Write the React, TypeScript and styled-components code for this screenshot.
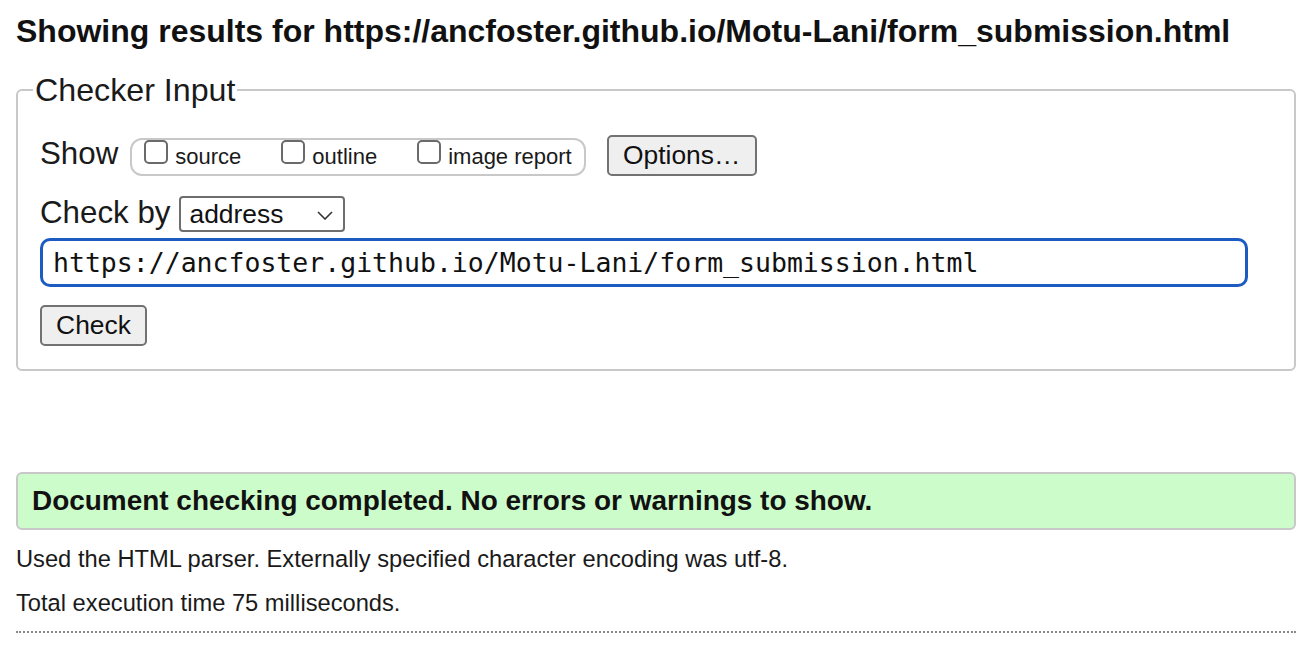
import styled, { createGlobalStyle } from "styled-components";

const GlobalStyle = createGlobalStyle`
  body {
    margin: 0;
    background: #fff;
    color: #1a1a1a;
    font-family: "Liberation Sans", Arial, Helvetica, sans-serif;
  }
`;

const SHOW_OPTIONS = ["source", "outline", "image report"];
const CHECKED_URL = "https://ancfoster.github.io/Motu-Lani/form_submission.html";

export default function App() {
  return (
    <>
      <GlobalStyle />
      <Page>
        <Heading>Showing results for {CHECKED_URL}</Heading>

        <CheckerForm>
          <Legend>Checker Input</Legend>

          <Row $top={27}>
            <Label $gap={12}>Show</Label>
            <ShowGroup>
              {SHOW_OPTIONS.map((opt) => (
                <ShowItem key={opt}>
                  <Box />
                  <ItemText>{opt}</ItemText>
                </ShowItem>
              ))}
            </ShowGroup>
            <Button $width={150} $left={21}>
              Options…
            </Button>
          </Row>

          <Row $top={19}>
            <Label $gap={9}>Check by</Label>
            <Select>
              <span>address</span>
              <svg width="16" height="9" viewBox="0 0 16 9">
                <polyline
                  points="1,1 8,8 15,1"
                  fill="none"
                  stroke="#333"
                  strokeWidth="1.6"
                />
              </svg>
            </Select>
          </Row>

          <UrlInput readOnly defaultValue={CHECKED_URL} />

          <Button $width={107} $top={18}>
            Check
          </Button>
        </CheckerForm>

        <Success>Document checking completed. No errors or warnings to show.</Success>

        <Info $top={15}>
          Used the HTML parser. Externally specified character encoding was utf-8.
        </Info>
        <Info $top={16}>Total execution time 75 milliseconds.</Info>

        <Dotted />
      </Page>
    </>
  );
}

// ---------------------------------------------------------------------------
// Styles
// ---------------------------------------------------------------------------

const Page = styled.div`
  padding: 0 16px;
  width: 1312px;
  box-sizing: border-box;
`;

const Heading = styled.h2`
  margin: 13px 0 0;
  font-size: 32px;
  line-height: 37px;
  font-weight: 700;
  color: #111;
`;

const CheckerForm = styled.fieldset`
  margin: 22px 0 0;
  padding: 0 22px 23px;
  border: 2px solid #c8c8c8;
  border-radius: 6px;
  min-width: 0;
`;

const Legend = styled.legend`
  margin-left: -7px;
  padding: 0 2px;
  font-size: 32.2px;
  line-height: 36px;
  color: #1a1a1a;
`;

const Row = styled.div<{ $top: number }>`
  display: flex;
  align-items: baseline;
  margin-top: ${(p) => p.$top}px;
`;

const Label = styled.span<{ $gap: number }>`
  font-size: 31.3px;
  line-height: 36px;
  margin-right: ${(p) => p.$gap}px;
`;

const ShowGroup = styled.div`
  display: flex;
  align-items: flex-end;
  gap: 40px;
  height: 38px;
  box-sizing: border-box;
  padding: 0 12px 5px;
  border: 2px solid #c8c8c8;
  border-radius: 12px;
`;

const ShowItem = styled.label`
  display: flex;
  align-items: baseline;
  gap: 7px;
`;

const Box = styled.span`
  display: inline-block;
  width: 24px;
  height: 24px;
  box-sizing: border-box;
  border: 2px solid #6a6a6a;
  border-radius: 5px;
  background: #fff;
`;

const ItemText = styled.span`
  font-size: 22px;
  line-height: 24px;
`;

const Button = styled.button<{ $width: number; $left?: number; $top?: number }>`
  display: block;
  width: ${(p) => p.$width}px;
  height: 41px;
  margin: ${(p) => p.$top ?? 0}px 0 0 ${(p) => p.$left ?? 0}px;
  padding: 0;
  box-sizing: border-box;
  border: 2px solid #727272;
  border-radius: 5px;
  background: #efefef;
  color: #111;
  font-family: "Liberation Sans", Arial, sans-serif;
  font-size: 26.4px;
  line-height: 37px;
`;

const Select = styled.div`
  display: flex;
  align-items: center;
  justify-content: space-between;
  width: 166px;
  height: 36px;
  box-sizing: border-box;
  padding: 0 10px 0 8px;
  border: 2px solid #6e6e6e;
  border-radius: 4px;
  font-size: 26.4px;
  line-height: 32px;
  color: #111;

  svg {
    margin-top: 2px;
  }
`;

const UrlInput = styled.input`
  display: block;
  width: 1208px;
  height: 49px;
  margin-top: 6px;
  box-sizing: border-box;
  padding: 0 10px;
  border: 3px solid #1b5bc2;
  border-radius: 10px;
  outline: none;
  font-family: "DejaVu Sans Mono", Menlo, monospace;
  font-size: 26.5px;
  color: #111;
  background: #fff;
`;

const Success = styled.div`
  margin-top: 101px;
  height: 58px;
  box-sizing: border-box;
  display: flex;
  align-items: center;
  padding: 0 14px;
  border: 2px solid #c8c8c8;
  border-radius: 6px;
  background: #cdfccb;
  font-size: 27.95px;
  font-weight: 700;
  color: #111;
`;

const Info = styled.p<{ $top: number }>`
  margin: ${(p) => p.$top}px 0 0;
  font-size: 23.7px;
  line-height: 28px;
  color: #1a1a1a;
`;

const Dotted = styled.hr`
  margin: 14px 0 0;
  border: none;
  border-top: 2px dotted #888;
`;
